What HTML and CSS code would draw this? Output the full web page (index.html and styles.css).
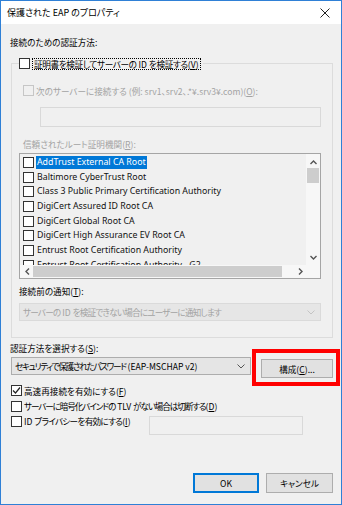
FILE: index.html
```html
<!DOCTYPE html>
<html lang="ja">
<head>
  <meta charset="UTF-8">
  <title>保護された EAP のプロパティ</title>
  <link rel="stylesheet" href="styles.css">
</head>
<body>
  <div class="window">
    <div class="titlebar">
      <span class="title">保護された EAP のプロパティ</span>
      <svg class="close" width="10" height="10" viewBox="0 0 10 10">
        <path d="M0.5 0.5 L9.5 9.5 M9.5 0.5 L0.5 9.5" stroke="#222" stroke-width="1" fill="none"/>
      </svg>
    </div>

    <div class="content">
      <div class="label auth-label">接続のための認証方法:</div>

      <div class="group">
        <div class="legend">
          <span class="cb"></span>
          <span class="focus"><span class="jp">証明書を検証してサーバーの</span> ID <span class="jp">を検証する</span>(<u>V</u>)</span>
        </div>
        <div class="check-row servers-row disabled">
          <span class="cb"></span>
          <span>次のサーバーに接続する (例: srv1、srv2、.*¥.srv3¥.com)(<u>O</u>):</span>
        </div>
        <div class="textbox servers-box"></div>
        <div class="label trust-label disabled">信頼されたルート証明機関(<u>R</u>):</div>

        <div class="list">
          <div class="list-view">
            <div class="item"><span class="cb"></span><span class="item-text selected">AddTrust External CA Root</span></div>
            <div class="item"><span class="cb"></span><span class="item-text">Baltimore CyberTrust Root</span></div>
            <div class="item"><span class="cb"></span><span class="item-text">Class 3 Public Primary Certification Authority</span></div>
            <div class="item"><span class="cb"></span><span class="item-text">DigiCert Assured ID Root CA</span></div>
            <div class="item"><span class="cb"></span><span class="item-text">DigiCert Global Root CA</span></div>
            <div class="item"><span class="cb"></span><span class="item-text">DigiCert High Assurance EV Root CA</span></div>
            <div class="item"><span class="cb"></span><span class="item-text">Entrust Root Certification Authority</span></div>
            <div class="item"><span class="cb"></span><span class="item-text">Entrust Root Certification Authority - G2</span></div>
          </div>
          <div class="vscroll">
            <svg class="arrow" width="7" height="5" viewBox="0 0 7 5"><path d="M0.5 4 L3.5 1 L6.5 4" stroke="#555" stroke-width="1.4" fill="none"/></svg>
            <div class="vthumb"></div>
            <svg class="arrow down" width="7" height="5" viewBox="0 0 7 5"><path d="M0.5 1 L3.5 4 L6.5 1" stroke="#555" stroke-width="1.4" fill="none"/></svg>
          </div>
          <div class="hscroll">
            <svg class="arrow" width="5" height="7" viewBox="0 0 5 7"><path d="M4 0.5 L1 3.5 L4 6.5" stroke="#555" stroke-width="1.4" fill="none"/></svg>
            <div class="hthumb"></div>
            <svg class="arrow right" width="5" height="7" viewBox="0 0 5 7"><path d="M1 0.5 L4 3.5 L1 6.5" stroke="#555" stroke-width="1.4" fill="none"/></svg>
          </div>
          <div class="corner"></div>
        </div>

        <div class="label notify-label">接続前の通知(<u>T</u>):</div>
        <div class="combo notify-combo disabled">
          <span><span class="jp">サーバーの</span> ID <span class="jp">を検証できない場合にユーザーに通知します</span></span>
          <svg width="8" height="5" viewBox="0 0 8 5"><path d="M0.5 0.5 L4 4 L7.5 0.5" stroke="#c4c4c4" stroke-width="1" fill="none"/></svg>
        </div>
      </div>

      <div class="label method-label">認証方法を選択する(<u>S</u>):</div>
      <div class="method-row">
        <div class="combo method-combo">
          <span><span class="jp">セキュリティで保護されたパスワード</span>&nbsp;(EAP-MSCHAP v2)</span>
          <svg width="8" height="5" viewBox="0 0 8 5"><path d="M0.5 0.5 L4 4 L7.5 0.5" stroke="#555" stroke-width="1" fill="none"/></svg>
        </div>
        <div class="configure-wrap">
          <button class="btn configure">構成(<u>C</u>)...</button>
          <div class="highlight"></div>
        </div>
      </div>

      <div class="options">
        <div class="check-row">
          <span class="cb checked">
            <svg width="9" height="9" viewBox="0 0 9 9"><path d="M1 4.5 L3.5 7 L8 1.5" stroke="#222" stroke-width="1.2" fill="none"/></svg>
          </span>
          <span>高速再接続を有効にする(<u>F</u>)</span>
        </div>
        <div class="check-row">
          <span class="cb"></span>
          <span class="tlv-text"><span class="jp">サーバーに暗号化バインドの</span> TLV <span class="jp">がない場合は切断する</span>(<u>D</u>)</span>
        </div>
        <div class="check-row privacy-row">
          <span class="cb"></span>
          <span class="privacy-text">ID <span class="jp">プライバシーを有効にする</span>(<u>I</u>)</span>
          <div class="textbox privacy-box"></div>
        </div>
      </div>

      <div class="footer">
        <button class="btn ok">OK</button>
        <button class="btn">キャンセル</button>
      </div>
    </div>
  </div>
</body>
</html>
```

FILE: styles.css
```css
body {
  margin: 0;
  font-family: "Noto Sans CJK JP", "Noto Sans", sans-serif;
  font-size: 8.6px;
  font-feature-settings: "palt";
  color: #000;
  background-color: #f0f0f0;
}

u {
  text-decoration: underline;
  text-underline-offset: 1px;
}

/* Japanese runs that the dialog font sets narrower */
.jp {
  letter-spacing: -1px;
}

.window {
  width: 342px;
  height: 505px;
  box-sizing: border-box;
  border: 1px solid #2f80d6;
  background-color: #f0f0f0;
  display: flex;
  flex-direction: column;
}

.titlebar {
  height: 23px;
  background-color: #fff;
  display: flex;
  align-items: center;
  justify-content: space-between;
  padding: 0 11px 0 6px;
  flex-shrink: 0;
}

.title {
  font-size: 9px;
}

.content {
  flex: 1;
  display: flex;
  flex-direction: column;
  padding: 0 8px 11px 9px;
}

.label {
  line-height: 15px;
  height: 15px;
  white-space: nowrap;
}

.disabled {
  color: #a3a3a3;
}

.auth-label {
  margin-top: 11px;
}

/* group box */
.group {
  margin: 13px 0 0 1px;
  border: 1px solid #dcdcdc;
  padding: 0 11px 16px 7px;
  display: flex;
  flex-direction: column;
}

.legend {
  align-self: flex-start;
  display: flex;
  align-items: center;
  gap: 2px;
  height: 13px;
  margin-top: -7px;
  padding-right: 2px;
  background-color: #f0f0f0;
}

.focus {
  border: 1px dotted #000;
  line-height: 10px;
  padding: 0 1px;
  white-space: nowrap;
}

.focus .jp {
  letter-spacing: -0.35px;
}

.cb {
  width: 9px;
  height: 9px;
  border: 1px solid #333;
  background-color: #fff;
  flex-shrink: 0;
  display: flex;
  align-items: center;
  justify-content: center;
}

.disabled .cb {
  border-color: #c6c6c6;
  background-color: #f0f0f0;
}

.check-row {
  display: flex;
  align-items: center;
  gap: 2px;
  height: 15.5px;
  white-space: nowrap;
}

.servers-row {
  margin: 13px 0 0 4px;
  height: 15px;
}

.textbox {
  border: 1px solid #d9d9d9;
  background-color: #f0f0f0;
  box-sizing: border-box;
}

.servers-box {
  margin: 9px 0 0 21px;
  height: 20px;
}

.trust-label {
  margin: 10px 0 0 4px;
}

/* certificate list */
.list {
  margin-top: 1px;
  height: 126px;
  box-sizing: border-box;
  border: 1px solid #a5a5a5;
  display: grid;
  grid-template-columns: 1fr 14px;
  grid-template-rows: 1fr 13px;
  background-color: #f0f0f0;
}

.list-view {
  overflow: hidden;
  padding-top: 1px;
}

.item {
  height: 14.7px;
  display: flex;
  align-items: center;
  padding-left: 3px;
  white-space: nowrap;
}

.item-text {
  margin-left: 2px;
  padding: 0 1px;
  line-height: 13px;
  font-family: "Noto Sans", sans-serif;
  font-size: 8.8px;
  color: #111;
}

.item-text.selected {
  background-color: #0078d7;
  color: #fff;
}

.vscroll {
  background-color: #f7f7f7;
  display: flex;
  flex-direction: column;
  align-items: center;
}

.vscroll .arrow {
  margin-top: 6px;
}

.vscroll .arrow.down {
  margin-top: auto;
  margin-bottom: 5px;
}

.vthumb {
  width: 12px;
  height: 15px;
  margin-top: 3px;
  background-color: #cdcdcd;
}

.hscroll {
  background-color: #f7f7f7;
  display: flex;
  align-items: center;
  padding-left: 5px;
}

.hthumb {
  width: 249px;
  height: 11px;
  margin-left: 3px;
  background-color: #cdcdcd;
}

.hscroll .arrow.right {
  margin-left: 16px;
}

.corner {
  background-color: #f7f7f7;
}

.notify-label {
  margin-top: 5px;
}

.combo {
  height: 18px;
  box-sizing: border-box;
  display: flex;
  align-items: center;
  justify-content: space-between;
  padding: 0 5px 0 3px;
  white-space: nowrap;
}

.notify-combo {
  margin-top: 4px;
  border: 1px solid #dadada;
  background-color: #e6e6e6;
}

.notify-combo .jp {
  letter-spacing: -0.8px;
}

.method-label {
  margin-top: 3px;
}

.method-row {
  display: flex;
  align-items: flex-start;
  margin-top: 1px;
}

.method-combo {
  margin-left: 1px;
  width: 240px;
  border: 1px solid #adadad;
  background-color: #e5e5e5;
}

.method-combo .jp {
  letter-spacing: -1.3px;
}

.configure-wrap {
  position: relative;
  margin: 2px 0 0 10px;
}

.btn {
  font-family: inherit;
  font-size: inherit;
  font-feature-settings: "palt";
  color: #000;
  background-color: #e1e1e1;
  border: 1px solid #adadad;
  padding: 0;
  box-sizing: border-box;
  width: 67px;
  height: 20px;
}

.configure {
  width: 72px;
  height: 19px;
  display: block;
}

.highlight {
  position: absolute;
  left: -9px;
  top: -10px;
  right: -7px;
  bottom: -8px;
  border: 4px solid #f00;
}

.options {
  margin-top: 5px;
  display: flex;
  flex-direction: column;
  padding-left: 1px;
}

.tlv-text .jp {
  letter-spacing: -1.1px;
}

.privacy-row {
  align-items: flex-start;
}

.privacy-row .cb {
  margin-top: 2px;
}

.privacy-text {
  line-height: 15px;
  width: 123px;
}

.privacy-text .jp {
  letter-spacing: -0.7px;
}

.privacy-box {
  margin-top: 2px;
  width: 154px;
  height: 19px;
}

.footer {
  margin-top: auto;
  display: flex;
  justify-content: flex-end;
  gap: 7px;
}

.btn.ok {
  width: 66px;
  border: 2px solid #0078d7;
}
```
